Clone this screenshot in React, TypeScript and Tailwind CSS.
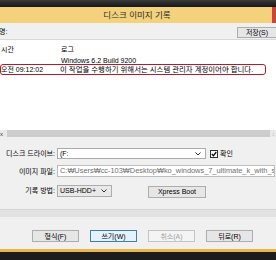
const FONT = "[font-family:'Liberation_Sans','Noto_Sans_CJK_KR',sans-serif]"

function Chevron() {
  return (
    <svg width="6" height="4" viewBox="0 0 6 4" className="shrink-0">
      <path d="M0.5 0.5 L3 3 L5.5 0.5" fill="none" stroke="#333" strokeWidth="1" />
    </svg>
  )
}

function Btn({ label, kind }: { label: string; kind?: 'focus' | 'disabled' }) {
  const cls =
    kind === 'focus'
      ? 'border-[#3c7fb1] bg-[#e5f1fb] text-black'
      : kind === 'disabled'
        ? 'border-[#c4c4c4] bg-[#f4f4f4] text-[#a3a3a3]'
        : 'border-[#adadad] bg-[#e6e6e6] text-black'
  return (
    <div className={`w-[47px] h-[12px] border flex items-center justify-center text-[7px] leading-none ${cls}`}>
      {label}
    </div>
  )
}

export default function App() {
  return (
    <div className={`w-[276px] h-[260px] overflow-hidden bg-[#1c1c1c] flex flex-col ${FONT}`}>
      {/* dark strip above window */}
      <div className="h-[7px] bg-gradient-to-b from-[#3a3a3a] to-[#161616]" />

      {/* title bar */}
      <div className="h-[16px] bg-[#f4d27c] flex items-center relative">
        <div className="flex-1 text-center text-[8.5px] leading-none text-[#2b2b2b] pl-[2px]">디스크 이미지 기록</div>
        <div className="w-[4px] h-full bg-[#c9463c]" />
      </div>

      {/* log header */}
      <div className="h-[16px] bg-[#f0f0f0] flex items-end justify-between pb-[1px]">
        <span className="text-[7px] leading-none mb-[3px] -ml-[1px]">명:</span>
        <div className="w-[39px] h-[11px] border border-[#adadad] border-r-0 bg-[#e6e6e6] flex items-center justify-center text-[7px] leading-none">
          저장(S)
        </div>
      </div>

      {/* log list */}
      <div className="h-[91px] bg-white pt-[3px] text-[7px] leading-none border-t border-[#d9d9d9]">
        <div className="h-[12px] flex items-center">
          <span className="w-[61px] pl-[1px]">시간</span>
          <span>로그</span>
        </div>
        <div className="h-[10px] flex items-center">
          <span className="w-[61px]" />
          <span>Windows 6.2 Build 9200</span>
        </div>
        <div className="w-[266px] h-[11px] -mt-[1px] border-[1.5px] border-[#b8172d] rounded-[3px] flex items-center">
          <span className="w-[59px]">오전 09:12:02</span>
          <span className="whitespace-nowrap text-[7.4px]">이 작업을 수행하기 위해서는 시스템 관리자 계정이어야 합니다.</span>
        </div>
      </div>

      {/* horizontal scrollbar */}
      <div className="h-[7px] bg-[#e9e9e9] flex items-center">
        <span className="w-[7px] text-[6px] leading-none text-[#444]">x</span>
        <div className="flex-1 h-full bg-[#cdcdcd]" />
        <span className="w-[6px] text-center text-[6px] leading-none text-[#444]">:</span>
      </div>

      {/* form */}
      <div className="h-[112px] bg-[#f0f0f0] flex flex-col text-[7px] leading-none">
        <div className="mt-[11px] h-[11px] flex items-center">
          <span className="w-[55px] text-right">디스크 드라이브:</span>
          <div className="ml-[2px] w-[149px] h-full border border-[#acacac] bg-white flex items-center justify-between pl-[2px] pr-[4px]">
            <span>(F:</span>
            <Chevron />
          </div>
          <div className="ml-[4px] w-[8px] h-[8px] border border-[#333] bg-white flex items-center justify-center">
            <svg width="6" height="6" viewBox="0 0 6 6">
              <path d="M0.8 3 L2.4 4.7 L5.3 1" fill="none" stroke="#111" strokeWidth="1.3" />
            </svg>
          </div>
          <span className="ml-[2px]">확인</span>
        </div>

        <div className="mt-[6px] h-[12px] flex items-center">
          <span className="w-[55px] text-right">이미지 파일:</span>
          <div className="ml-[2px] w-[218px] h-full border border-[#bdbdbd] bg-white flex items-center pl-[2px] overflow-hidden">
            <span className="whitespace-nowrap text-[7.4px] text-[#707070]">C:₩Users₩cc-103₩Desktop₩ko_windows_7_ultimate_k_with_s</span>
          </div>
        </div>

        <div className="mt-[7px] h-[13px] flex items-center">
          <span className="w-[55px] text-right">기록 방법:</span>
          <div className="ml-[2px] w-[55px] h-[12px] border border-[#acacac] bg-[#e9e9e9] flex items-center justify-between pl-[2px] pr-[4px]">
            <span>USB-HDD+</span>
            <Chevron />
          </div>
          <div className="ml-[36px] mt-[2px] w-[58px] h-[12px] border border-[#adadad] bg-[#e6e6e6] flex items-center justify-center">
            Xpress Boot
          </div>
        </div>

        {/* separator band */}
        <div className="mt-[12px] h-[8px] bg-[#e2e2e2] border-t border-[#d6d6d6]" />

        <div className="mt-[13px] flex gap-[11px] pl-[32px]">
          <Btn label="형식(F)" />
          <Btn label="쓰기(W)" kind="focus" />
          <Btn label="취소(A)" kind="disabled" />
          <Btn label="뒤로(R)" />
        </div>
      </div>

      {/* bottom edge */}
      <div className="h-[3px] bg-[#e9b64c]" />
      <div className="flex-1 bg-[#1c1c1c]" />
    </div>
  )
}
